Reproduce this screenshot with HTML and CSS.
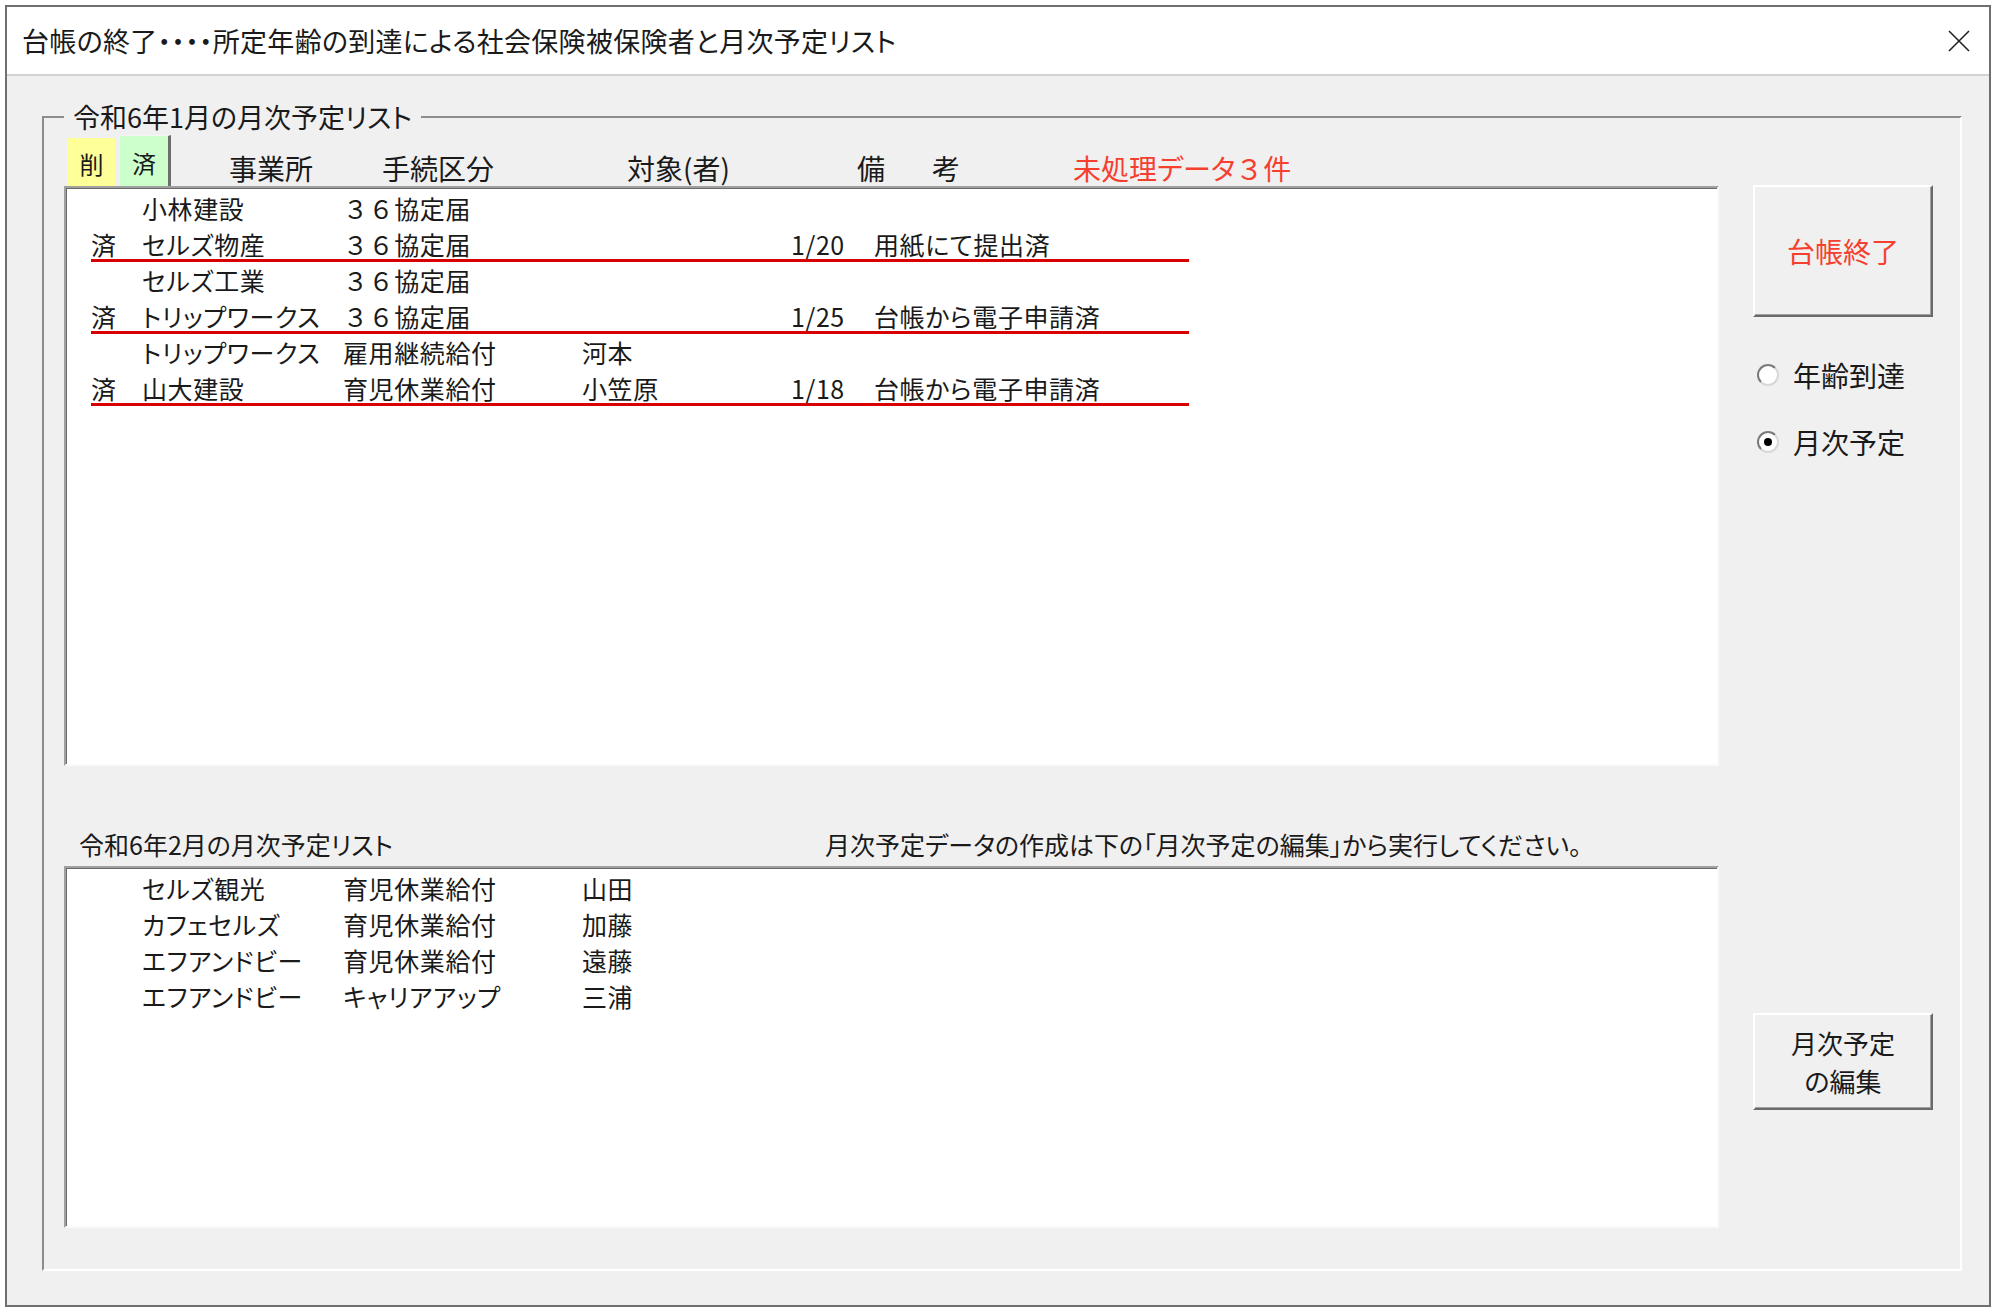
FILE: index.html
```html
<!DOCTYPE html>
<html lang="ja">
<head>
    <meta charset="UTF-8">
    <title>台帳の終了</title>
    <link rel="stylesheet" href="styles.css">
</head>
<body>

    <div class="window">
        <!-- タイトルバー -->
        <div class="titlebar">
            <span class="title">台帳の終了・・・・所定年齢の到達による社会保険被保険者と月次予定リスト</span>
            <svg class="close" width="22" height="22" viewBox="0 0 22 22">
                <path d="M1 1 L21 21 M21 1 L1 21" stroke="#222" stroke-width="1.6" fill="none"/>
            </svg>
        </div>

        <div class="client">
            <fieldset class="frame">
                <legend>令和6年1月の月次予定リスト</legend>
                <div class="frame-body">

                    <div class="left">
                        <div class="head">
                            <span class="tab tab-del">削</span>
                            <span class="tab tab-done">済</span>
                            <span class="h h-office">事業所</span>
                            <span class="h h-proc">手続区分</span>
                            <span class="h h-target">対象(者)</span>
                            <span class="h h-note"><span>備</span><span>考</span></span>
                            <span class="h h-count">未処理データ<span class="fw">３</span>件</span>
                        </div>

                        <!-- 今月のリスト -->
                        <div class="list list-main">
                            <div class="row">
                                <span></span><span>小林建設</span><span class="fw">３６協定届</span><span></span><span></span><span></span>
                            </div>
                            <div class="row done">
                                <span>済</span><span>セルズ物産</span><span class="fw">３６協定届</span><span></span><span>1/20</span><span>用紙にて提出済</span>
                            </div>
                            <div class="row">
                                <span></span><span>セルズ工業</span><span class="fw">３６協定届</span><span></span><span></span><span></span>
                            </div>
                            <div class="row done">
                                <span>済</span><span>トリップワークス</span><span class="fw">３６協定届</span><span></span><span>1/25</span><span>台帳から電子申請済</span>
                            </div>
                            <div class="row">
                                <span></span><span>トリップワークス</span><span>雇用継続給付</span><span>河本</span><span></span><span></span>
                            </div>
                            <div class="row done">
                                <span>済</span><span>山大建設</span><span>育児休業給付</span><span>小笠原</span><span>1/18</span><span>台帳から電子申請済</span>
                            </div>
                        </div>

                        <div class="sub">
                            <span class="sub-title">令和6年2月の月次予定リスト</span>
                            <span>月次予定データの作成は下の「月次予定の編集」から実行してください。</span>
                        </div>

                        <!-- 来月のリスト -->
                        <div class="list list-next">
                            <div class="row">
                                <span></span><span>セルズ観光</span><span>育児休業給付</span><span>山田</span><span></span><span></span>
                            </div>
                            <div class="row">
                                <span></span><span>カフェセルズ</span><span>育児休業給付</span><span>加藤</span><span></span><span></span>
                            </div>
                            <div class="row">
                                <span></span><span>エフアンドビー</span><span>育児休業給付</span><span>遠藤</span><span></span><span></span>
                            </div>
                            <div class="row">
                                <span></span><span>エフアンドビー</span><span>キャリアアップ</span><span>三浦</span><span></span><span></span>
                            </div>
                        </div>
                    </div>

                    <div class="side">
                        <button class="btn btn-end">台帳終了</button>
                        <label class="radio radio-first"><span class="dot"></span>年齢到達</label>
                        <label class="radio radio-second checked"><span class="dot"></span>月次予定</label>
                        <button class="btn btn-edit">月次予定<br>の編集</button>
                    </div>

                </div>
            </fieldset>
        </div>
    </div>

</body>
</html>
```

FILE: styles.css
```css
/* 全体 */
body {
    margin: 0;
    background: #fff;
    font-family: "Noto Sans CJK JP", "Noto Sans", sans-serif;
    font-feature-settings: "palt";
    color: #1a1a1a;
}

.fw {
    font-feature-settings: normal;
}

/* ウィンドウ */
.window {
    box-sizing: border-box;
    margin: 5px 0 0 5px;
    width: 1986px;
    height: 1302px;
    border: 2px solid #6f6f6f;
    background: #f0f0f0;
    display: flex;
    flex-direction: column;
}

.titlebar {
    height: 67px;
    background: #fff;
    border-bottom: 2px solid #d2d2d2;
    display: flex;
    align-items: center;
    justify-content: space-between;
    padding: 0 19px 0 15px;
    font-size: 27px;
    letter-spacing: 0.3px;
}

.client {
    flex: 1;
    padding: 24px 27px 0 35px;
}

/* グループ枠 */
.frame {
    margin: 0;
    min-width: 0;
    padding: 0 27px 41px 20px;
    border-style: solid;
    border-width: 2px;
    border-color: #8d8d8d #fff #fff #8d8d8d;
}

.frame legend {
    padding: 0 9px;
    font-size: 27px;
    line-height: 34px;
}

.frame-body {
    display: grid;
    grid-template-columns: 1655px 180px;
    column-gap: 34px;
}

/* 見出し行 */
.head {
    box-sizing: border-box;
    height: 52px;
    padding-bottom: 2px;
    display: flex;
    align-items: flex-end;
    font-size: 28px;
    line-height: 32px;
}

.tab {
    box-sizing: border-box;
    display: flex;
    justify-content: center;
    align-items: center;
    align-self: flex-end;
    margin-bottom: -2px;
    font-size: 24px;
    padding-top: 4px;
}

.tab-del {
    margin-left: 4px;
    width: 47px;
    height: 48px;
    background: #ffff99;
}

.tab-done {
    margin-left: 5px;
    width: 51px;
    height: 51px;
    background: #ccffcc;
    border-top: 1px solid #f4f4f4;
    border-right: 3px solid #6d6d6d;
}

.h-office { margin-left: 58px; width: 153px; }
.h-proc { width: 245px; }
.h-target { width: 230px; }

.h-note {
    width: 216px;
    display: flex;
    gap: 47px;
}

.h-count {
    color: #f5402f;
}

/* リスト */
.list {
    box-sizing: border-box;
    background: #fff;
    border-style: solid;
    border-width: 2px;
    border-color: #a0a0a0 #fafafa #fafafa #a0a0a0;
    box-shadow: inset 1px 1px 0 #6a6a6a;
    padding-top: 2px;
}

.list-main { height: 580px; }
.list-next { height: 362px; }

.row {
    display: grid;
    grid-template-columns: 51px 201px 239px 209px 83px auto;
    padding-left: 25px;
    height: 36px;
    font-size: 25px;
    letter-spacing: 0.6px;
    line-height: 36px;
    white-space: nowrap;
}

.row.done {
    background: linear-gradient(#d80000, #d80000) no-repeat 25px 33px / 1098px 3px;
}

.sub {
    height: 100px;
    box-sizing: border-box;
    padding-bottom: 4px;
    display: flex;
    align-items: flex-end;
    font-size: 25px;
    line-height: 36px;
}

.sub-title {
    box-sizing: border-box;
    width: 761px;
    padding-left: 15px;
}

/* 右側のボタン */
.side {
    display: flex;
    flex-direction: column;
}

.btn {
    box-sizing: border-box;
    width: 180px;
    background: #f0f0f0;
    border-style: solid;
    border-width: 2px;
    border-color: #fff #6a6a6a #6a6a6a #fff;
    box-shadow: inset -1px -1px 0 #a0a0a0;
    font-family: inherit;
    font-feature-settings: "palt";
    font-size: 28px;
    line-height: 34px;
    color: #1a1a1a;
    padding: 0;
}

.btn-end {
    margin-top: 51px;
    height: 132px;
    color: #f5402f;
}

.btn-edit {
    margin-top: 553px;
    height: 97px;
    font-size: 26px;
    line-height: 38px;
}

.radio {
    display: flex;
    align-items: center;
    height: 36px;
    font-size: 28px;
}

.radio-first { margin-top: 40px; }
.radio-second { margin-top: 31px; }

.dot {
    box-sizing: border-box;
    width: 22px;
    height: 22px;
    margin: 0 14px 0 4px;
    border-radius: 50%;
    border: 2px solid;
    border-color: #7a7a7a #d8d8d8 #d8d8d8 #7a7a7a;
    background: #fff;
    display: flex;
    justify-content: center;
    align-items: center;
}

.checked .dot::after {
    content: "";
    width: 8px;
    height: 8px;
    border-radius: 50%;
    background: #000;
}
```
